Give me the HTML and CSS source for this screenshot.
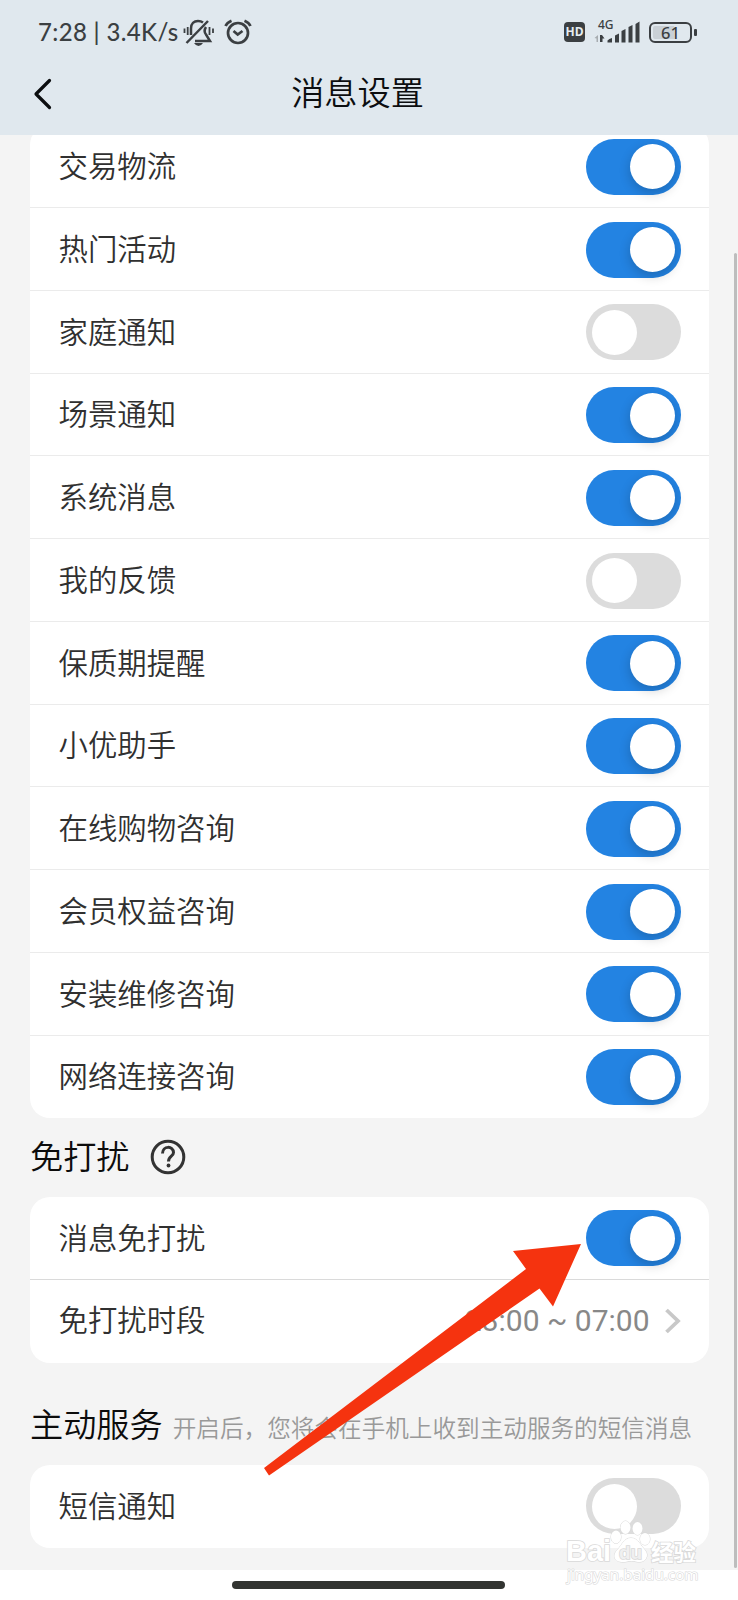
FILE: index.html
```
<!DOCTYPE html>
<html lang="zh-CN">
<head>
<meta charset="utf-8">
<title>消息设置</title>
<link rel="stylesheet" href="styles.css">
</head>
<body>
<div class="screen">
  <header class="header">
    <div class="status">
      <span class="clock">7:28 | 3.4K/s</span>
      <svg class="bell" width="32" height="28" viewBox="0 0 32 28" fill="none" stroke="#3b3f42" stroke-width="2">
        <path d="M8 17V10.500C8 5.500 11 3 15 3Q18 3 20 4.500M23 9C21 12 21 14 23 16.500L27 23H12M3.500 25L25 3" stroke-width="2.500"/>
        <path d="M1.500 10.500V15M4.700 9V17M26.500 9V17M30 10.500V15" stroke-width="1.800"/>
        <path d="M11 25H20Q18 28 15.500 28T11 25Z" fill="#3b3f42" stroke="none"/>
      </svg>
      <svg class="alarm" width="28" height="26" viewBox="0 0 28 26" fill="none" stroke="#3b3f42" stroke-width="2.700">
        <circle cx="14" cy="14" r="10"/>
        <path d="M9.500 12L13.700 15.500L18.500 12"/>
        <path d="M1.500 7Q3 3.500 7.500 1.700M26.500 7Q25 3.500 20.500 1.700"/>
      </svg>
      <span class="hd">HD</span>
      <svg class="signal" width="47" height="31" viewBox="0 -3 47 31" fill="#3b3f42">
        <text x="4" y="9" class="net">4G</text>
        <path d="M0.500 18L4 15V22H2.500V18.500Z" fill="#a7acb0"/>
        <path d="M6 15H8L10.500 18.500H8.500V22H6Z"/>
        <path d="M13.500 22.500V20.500Q15 18.500 18 18V22.500ZM21 22.500V15.500L25 13.500V22.500ZM27.500 22.500V11L31.500 9V22.500ZM34.500 22.500V7L38.500 5V22.500ZM41.500 22.500V4L45.500 1.500V22.500Z"/>
      </svg>
      <span class="battery">61</span>
    </div>
    <div class="bar">
      <svg class="back" width="20" height="32" viewBox="0 0 20 32" fill="none" stroke="#0c0e10" stroke-width="3.200" stroke-linecap="round" stroke-linejoin="round"><path d="M16.500 2.500L3 16L16.500 29.500"/></svg>
      <h1 class="title">消息设置</h1>
    </div>
  </header>
  <main class="content">
    <section class="card card-main">
      <div class="row"><span class="label">交易物流</span><i class="switch on"></i></div>
      <div class="row"><span class="label">热门活动</span><i class="switch on"></i></div>
      <div class="row"><span class="label">家庭通知</span><i class="switch"></i></div>
      <div class="row"><span class="label">场景通知</span><i class="switch on"></i></div>
      <div class="row"><span class="label">系统消息</span><i class="switch on"></i></div>
      <div class="row"><span class="label">我的反馈</span><i class="switch"></i></div>
      <div class="row"><span class="label">保质期提醒</span><i class="switch on"></i></div>
      <div class="row"><span class="label">小优助手</span><i class="switch on"></i></div>
      <div class="row"><span class="label">在线购物咨询</span><i class="switch on"></i></div>
      <div class="row"><span class="label">会员权益咨询</span><i class="switch on"></i></div>
      <div class="row"><span class="label">安装维修咨询</span><i class="switch on"></i></div>
      <div class="row"><span class="label">网络连接咨询</span><i class="switch on"></i></div>
    </section>
    <div class="heading heading-quiet">
      <h2>免打扰</h2>
      <svg width="36" height="36" viewBox="0 0 36 36" fill="none" stroke="#333" stroke-width="3"><circle cx="18" cy="18" r="15.800"/><path d="M12.500 14.500C12.500 6.500 23.500 6.500 23.500 13.500C23.500 17.500 18.500 17 18.500 22.500"/><circle cx="18.500" cy="26.500" r="1.900" fill="#333" stroke="none"/></svg>
    </div>
    <section class="card card-quiet">
      <div class="row"><span class="label">消息免打扰</span><i class="switch on"></i></div>
      <div class="row"><span class="label">免打扰时段</span><span class="period">23:00 ~ 07:00<svg width="16" height="26" viewBox="0 0 16 26" fill="none" stroke="#c8c8c8" stroke-width="3.800"><path d="M1.500 2L13 13L1.500 24"/></svg></span></div>
    </section>
    <div class="heading heading-service">
      <h2>主动服务</h2>
      <p>开启后，您将会在手机上收到主动服务的短信消息</p>
    </div>
    <section class="card">
      <div class="row"><span class="label">短信通知</span><i class="switch"></i></div>
    </section>
  </main>
  <footer class="nav"><div class="home"></div></footer>
  <div class="scrollbar"></div>
  <svg class="arrow" width="320" height="236" viewBox="0 0 320 236"><path fill="#f5330f" d="M317 1L249 8L262 26L0 225L5 232.500L275.500 45.500L289 63.500Z"/></svg>
  <svg class="watermark" width="140" height="70" viewBox="0 0 140 70" fill="#fff" stroke="#d9d9d9" stroke-width="1.600" paint-order="stroke">
    <text x="1" y="41" class="brand">Bai</text>
    <g stroke-width="1"><ellipse cx="51" cy="17" rx="5" ry="6.500"/><ellipse cx="60.500" cy="7.500" rx="5" ry="6.500"/><ellipse cx="72.500" cy="8.500" rx="5" ry="6.500"/><ellipse cx="80" cy="19" rx="5" ry="6"/><path d="M66 18C73 18 76 26 80 30C85 36 80 43 73 42Q66 40 60 42C50 43 46 36 53 29C57 25 59 18 66 18Z"/></g>
    <text x="54" y="39" class="du">du</text>
    <text x="86" y="40.500" class="brand-cn">经验</text>
    <text x="2" y="59.500" class="site">jingyan.baidu.com</text>
  </svg>
</div>
</body>
</html>
```
FILE: styles.css
```
* { box-sizing: border-box; }
body { margin: 0; font-family: "Noto Sans CJK SC", sans-serif; font-weight: 350; color: #303030; }
h1, h2, p { margin: 0; font-weight: inherit; }
svg { display: block; flex: none; }
.screen { position: relative; width: 738px; height: 1600px; overflow: hidden; display: flex; flex-direction: column; background: #fff; }
.header { height: 135px; flex: none; background: #e0e8ee; }
.status { display: flex; align-items: center; height: 64px; padding: 0 42px 0 38px; color: #3b3f42; }
.clock { width: 145px; font: 500 24px/28px Lato, sans-serif; letter-spacing: .35px; white-space: nowrap; }
.alarm { margin-left: 9px; }
.hd { margin-left: auto; width: 21px; height: 20px; border-radius: 4px; background: #3b3f42; color: #e6edf1; font: 700 12px/20px "Open Sans", sans-serif; text-align: center; }
.signal { margin-left: 9px; }
.net { font: 500 12px "Noto Sans", sans-serif; }
.battery { position: relative; margin: 0 4px 0 8px; width: 43px; height: 21px; border: 2.500px solid #3b3f42; border-radius: 6px; background: linear-gradient(90deg, #c9d0d6 60%, transparent 60%) content-box; padding: 2px; font: 500 16.500px/13px "Noto Sans", sans-serif; text-align: center; }
.battery::after { content: ""; position: absolute; right: -7px; top: 5px; width: 3px; height: 7px; background: #3b3f42; border-radius: 1px; }
.bar { display: grid; grid-template-columns: 60px 1fr 83px; align-items: center; height: 60px; }
.back { margin-left: 33px; }
.title { padding-bottom: 7px; font-size: 33.200px; line-height: 48px; text-align: center; color: #0c0e10; }
.content { flex: none; height: 1435px; overflow: hidden; padding: 0 29px 0 30px; background: #f4f4f4; }
.card { border-radius: 20px; background: #fff; overflow: hidden; }
.card-main { margin-top: -9.600px; }
.row { display: flex; align-items: center; justify-content: space-between; height: 82.750px; padding: 0 28px 0 28.500px; box-shadow: inset 0 -1px #ebebeb; font-size: 29.400px; line-height: 44px; }
.row:last-child { box-shadow: none; }
.card-quiet .row:first-child { box-shadow: inset 0 -1px #dadada; }
.label { padding-bottom: 5.500px; }
.switch { position: relative; width: 95px; height: 56px; border-radius: 28px; background: #dcdcdc; }
.switch::after { content: ""; position: absolute; left: 6px; top: 5.500px; width: 45px; height: 45px; border-radius: 50%; background: #fff; }
.switch.on { background: #2383e2; }
.switch.on::after { left: 44px; box-shadow: 0 4px 12px rgba(0, 0, 0, .2); }
.heading { display: flex; color: #0c0c0c; white-space: nowrap; }
.heading h2 { font-size: 33.200px; line-height: 48px; }
.heading-quiet { height: 78.600px; padding-bottom: 1px; align-items: center; gap: 20.500px; }
.heading-quiet h2 { padding-bottom: 4px; }
.heading-service { height: 102.500px; padding-top: 36px; align-items: baseline; gap: 10px; }
.heading p { font-size: 23.620px; color: #999; }
.period { display: flex; align-items: center; gap: 15.500px; font: 400 30px/44px Roboto, sans-serif; color: #888; }
.nav { display: flex; height: 30px; padding: 11px 0 0 232px; }
.home { width: 273px; height: 8px; border-radius: 4px; background: #323431; }
.scrollbar { position: absolute; left: 734px; top: 253px; width: 3px; height: 1315px; border-radius: 2px; background: #bdbdbd; }
.arrow { position: absolute; left: 264px; top: 1243px; }
.watermark { position: absolute; left: 565px; top: 1520px; }
.brand { font: 700 29px "Liberation Sans", sans-serif; }
.du { font: 700 19px "Liberation Sans", sans-serif; fill: #f0f0f0; }
.brand-cn { font: 700 22.500px "Noto Sans CJK SC", sans-serif; }
.site { font: 400 15.200px "Noto Sans", sans-serif; stroke-width: 1.200px; }
```
